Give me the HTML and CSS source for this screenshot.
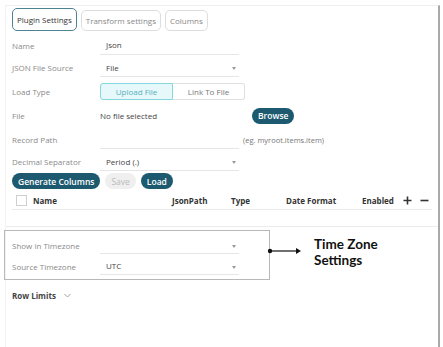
FILE: index.html
```html
<!DOCTYPE html>
<html lang="en">
<head>
    <meta charset="UTF-8">
    <title>Plugin Settings</title>
    <link rel="stylesheet" href="styles.css">
</head>
<body>

<div class="panel">
    <div class="tabs">
        <button class="tab active">Plugin Settings</button>
        <button class="tab">Transform settings</button>
        <button class="tab">Columns</button>
    </div>

    <div class="row row-name">
        <span class="label">Name</span>
        <div class="field">Json</div>
    </div>
    <div class="row row-source">
        <span class="label">JSON File Source</span>
        <div class="field select">File<span class="caret"></span></div>
    </div>
    <div class="row row-load">
        <span class="label">Load Type</span>
        <div class="toggle">
            <span class="toggle-item on">Upload File</span>
            <span class="toggle-item">Link To File</span>
        </div>
    </div>
    <div class="row row-file">
        <span class="label">File</span>
        <span class="file-name">No file selected</span>
        <button class="pill">Browse</button>
    </div>
    <div class="row row-path">
        <span class="label">Record Path</span>
        <div class="field"></div>
        <span class="hint">(eg. myroot.items.item)</span>
    </div>
    <div class="row row-decimal">
        <span class="label">Decimal Separator</span>
        <div class="field select">Period (.)<span class="caret"></span></div>
    </div>

    <div class="actions">
        <button class="pill">Generate Columns</button>
        <button class="pill disabled">Save</button>
        <button class="pill">Load</button>
    </div>

    <div class="col-head">
        <span class="check"></span>
        <span>Name</span>
        <span>JsonPath</span>
        <span>Type</span>
        <span>Date Format</span>
        <span>Enabled</span>
        <svg width="9" height="9" viewBox="0 0 9 9"><path d="M4.5 0.5v8M0.5 4.5h8" stroke="#333" stroke-width="1.6"/></svg>
        <svg width="9" height="9" viewBox="0 0 9 9"><path d="M0.5 4.5h8" stroke="#333" stroke-width="1.6"/></svg>
    </div>

    <div class="divider"></div>

    <div class="tz-wrap">
        <div class="tz-box">
            <div class="row row-tz1">
                <span class="label">Show in Timezone</span>
                <div class="field select"><span class="caret"></span></div>
            </div>
            <div class="row row-tz2">
                <span class="label">Source Timezone</span>
                <div class="field select">UTC<span class="caret"></span></div>
            </div>
        </div>
        <svg class="pointer" width="36" height="10" viewBox="0 0 36 10">
            <circle cx="3" cy="5" r="2.2" fill="#111"/>
            <path d="M3 5h27" stroke="#111" stroke-width="1.2"/>
            <path d="M29 2l5 3-5 3z" fill="#111"/>
        </svg>
        <div class="note">Time Zone<br>Settings</div>
    </div>

    <div class="row-limits">
        <span>Row Limits</span>
        <svg width="7" height="5" viewBox="0 0 7 5"><path d="M0.5 1l3 3 3-3" fill="none" stroke="#999" stroke-width="0.9"/></svg>
    </div>
</div>

</body>
</html>
```

FILE: styles.css
```css
body {
    margin: 0;
    background-color: #ffffff;
    font-family: "Open Sans", sans-serif;
    font-size: 8px;
    color: #444;
}
.panel {
    margin: 5px 3px 0 5px;
    height: 342px;
    box-sizing: border-box;
    border-top: 1px solid #eeeeee;
    border-left: 1px solid #f3f3f3;
    border-right: 2px solid #a9a9a9;
    padding: 2px 6px 0 6px;
}
.tabs {
    display: flex;
    gap: 4px;
}
.tab {
    font-family: "Open Sans", sans-serif;
    font-size: 8px;
    color: #888;
    background: #fff;
    border: 1px solid #dddddd;
    border-radius: 5px;
    height: 21px;
    margin-top: 2px;
    padding: 0 4px;
}
.tab.active {
    color: #333;
    border-color: #4d8493;
    height: 23px;
    margin-top: 0;
}
.row {
    display: flex;
    align-items: center;
}
.label {
    width: 88px;
    color: #8a8a8a;
}
.field {
    width: 139px;
    height: 100%;
    box-sizing: border-box;
    border-bottom: 1px solid #e6e6e6;
    padding-left: 6px;
    display: flex;
    align-items: center;
    position: relative;
}
.caret {
    position: absolute;
    right: 3px;
    top: 50%;
    border-left: 2.5px solid transparent;
    border-right: 2.5px solid transparent;
    border-top: 3px solid #999;
}
.row-name {
    height: 20px;
    margin-top: 4px;
}
.row-source {
    height: 19px;
    margin-top: 3px;
}
.row-load {
    height: 17px;
    margin-top: 6px;
}
.toggle {
    display: flex;
    width: 145px;
    height: 17px;
}
.toggle-item {
    flex: 1;
    display: flex;
    align-items: center;
    justify-content: center;
    border: 1px solid #e0e0e0;
    border-left: none;
    border-radius: 0 3px 3px 0;
    color: #777;
}
.toggle-item.on {
    background-color: #e6f8fa;
    border: 1px solid #86d8df;
    border-radius: 3px 0 0 3px;
    color: #55b0bd;
}
.row-file {
    height: 17px;
    margin-top: 7px;
}
.file-name {
    width: 152px;
}
.pill {
    font-family: "Open Sans", sans-serif;
    font-size: 8.5px;
    font-weight: 600;
    color: #fff;
    background-color: #1d5a6f;
    border: none;
    border-radius: 9px;
    height: 16px;
    padding: 0 6px;
}
.pill.disabled {
    background-color: #efefef;
    color: #bbb;
    font-weight: 400;
}
.row-path {
    height: 19px;
    margin-top: 6px;
}
.hint {
    margin-left: 4px;
    color: #777;
    font-size: 7.5px;
}
.row-decimal {
    height: 19px;
    margin-top: 3px;
}
.actions {
    display: flex;
    gap: 5px;
    margin-top: 2px;
}
.col-head {
    display: grid;
    grid-template-columns: 17px 139px 59px 55px 76px 41px 17px 12px;
    align-items: center;
    height: 18px;
    padding-left: 4px;
    margin-top: 2px;
    border-bottom: 1px solid #ececec;
    font-weight: 700;
    color: #333;
}
.check {
    width: 9px;
    height: 9px;
    border: 1px solid #cfcfcf;
}
.divider {
    margin: 16px -6px 0 -6px;
    border-top: 1px solid #ececec;
}
.tz-wrap {
    display: flex;
    align-items: flex-start;
    margin: 3px 0 0 -8px;
}
.tz-box {
    width: 266px;
    height: 50px;
    box-sizing: border-box;
    border: 1.5px solid #b8b8b8;
    padding: 5px 0 0 7px;
}
.row-tz1 {
    height: 18px;
}
.row-tz2 {
    height: 18px;
    margin-top: 3px;
}
.pointer {
    margin: 16px 0 0 -3px;
}
.note {
    margin: 6px 0 0 11px;
    font-family: Lato, sans-serif;
    font-size: 13.5px;
    font-weight: 700;
    line-height: 16px;
    color: #111;
}
.row-limits {
    display: flex;
    align-items: center;
    gap: 8px;
    margin-top: 10px;
    font-weight: 700;
    color: #444;
}
```
